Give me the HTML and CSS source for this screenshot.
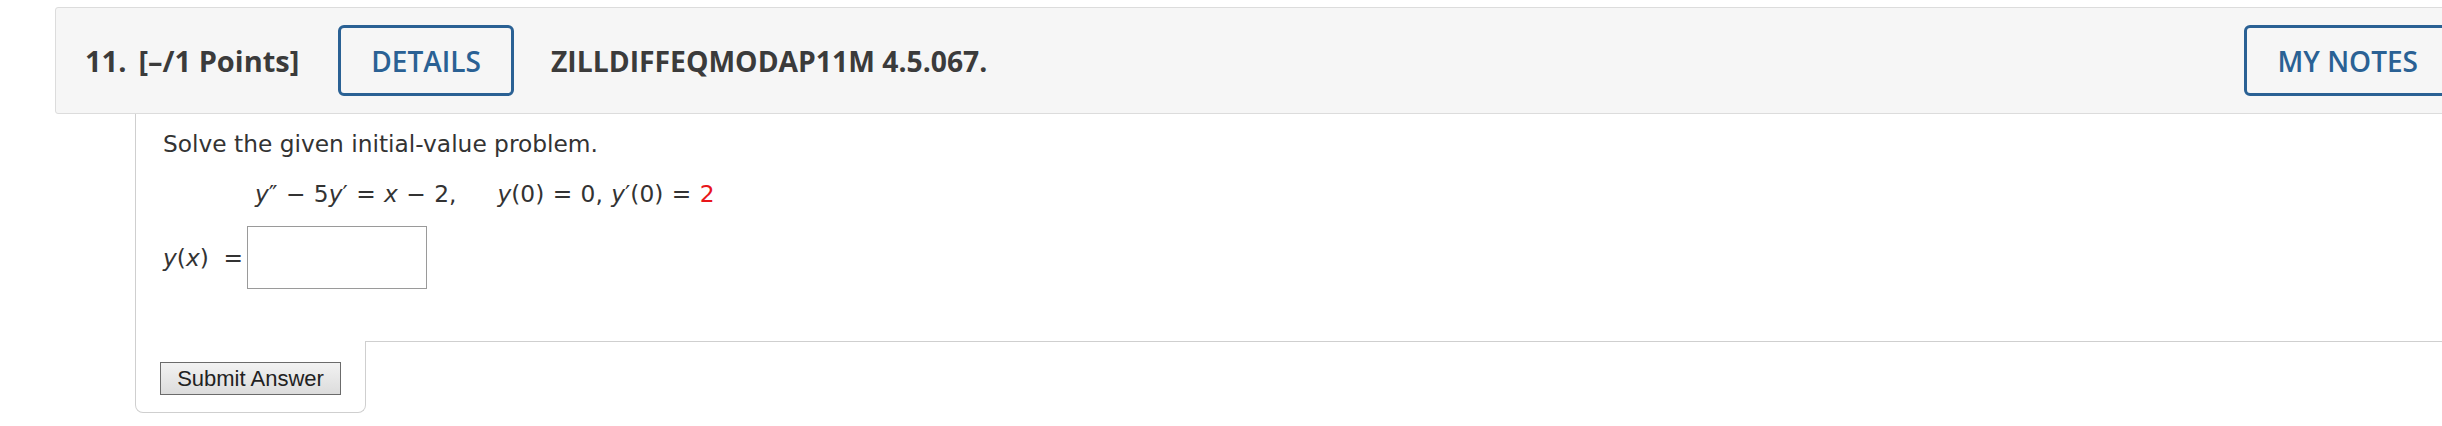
FILE: index.html
```html
<!DOCTYPE html>
<html lang="en">
<head>
    <meta charset="UTF-8">
    <meta name="viewport" content="width=device-width, initial-scale=1.0">
    <title>Question 11</title>
    <link rel="stylesheet" href="styles.css">
</head>
<body>

<div class="page">
    <div class="question-header">
        <span class="q-number">11.</span>
        <span class="q-points">[&ndash;/1 Points]</span>
        <button class="outline-btn details-btn">DETAILS</button>
        <span class="q-code">ZILLDIFFEQMODAP11M 4.5.067.</span>
        <button class="outline-btn notes-btn">MY NOTES</button>
    </div>

    <div class="question-body">
        <p class="prompt">Solve the given initial-value problem.</p>
        <p class="equation">
            <i>y</i>&Prime; &minus; 5<i>y</i>&prime; = <i>x</i> &minus; 2,<span class="cond"><i>y</i>(0) = 0, <i>y</i>&prime;(0) = <span class="red">2</span></span>
        </p>
        <div class="answer-row">
            <span class="answer-label"><i>y</i>(<i>x</i>) &nbsp;=</span>
            <input type="text" class="answer-input">
        </div>
    </div>

    <div class="submit-row">
        <div class="submit-box">
            <button class="submit-btn">Submit Answer</button>
        </div>
        <div class="submit-rest"></div>
    </div>
</div>

</body>
</html>
```

FILE: styles.css
```css
html, body {
    margin: 0;
    padding: 0;
    background-color: #fff;
    overflow: hidden;
}
.page {
    width: 2432px;
    margin-left: 55px;
    padding-top: 7px;
}
.question-header {
    display: flex;
    align-items: center;
    height: 105px;
    padding-left: 29px;
    padding-right: 34px;
    background-color: #f6f6f6;
    border: 1px solid #dcdcdc;
    border-radius: 3px;
    font-family: "Open Sans", sans-serif;
    font-weight: 700;
    font-size: 29px;
    color: #3b3b3b;
}
.q-number {
    margin-right: 12px;
}
.q-points {
    margin-right: 39px;
}
.outline-btn {
    height: 71px;
    padding: 0 30px;
    background: transparent;
    border: 3px solid #2a6194;
    border-radius: 6px;
    font-family: "Open Sans", sans-serif;
    font-weight: 600;
    font-size: 28px;
    color: #2a6194;
}
.q-code {
    margin-left: 37px;
    font-size: 28.3px;
}
.notes-btn {
    margin-left: auto;
    padding: 0 31px;
}
.question-body {
    margin-left: 80px;
    padding: 15px 0 0 27px;
    border-left: 1px solid #cfcfcf;
    font-family: "DejaVu Sans", Verdana, sans-serif;
    font-size: 23.3px;
    color: #333;
    height: 212px;
}
.question-body p {
    margin: 0;
    line-height: 30px;
}
.prompt {
    margin-bottom: 20px !important;
}
.equation {
    padding-left: 92px;
    white-space: nowrap;
    word-spacing: 1px;
}
.cond {
    margin-left: 41px;
}
.red {
    color: #e8161b;
}
.answer-row {
    display: flex;
    align-items: center;
    margin-top: 17px;
}
.answer-label {
    margin-right: 4px;
    line-height: 30px;
}
.answer-input {
    width: 180px;
    height: 63px;
    margin: 0;
    padding: 0;
    border: 1px solid #9a9a9a;
    box-sizing: border-box;
}
.submit-row {
    display: flex;
    margin-left: 80px;
}
.submit-box {
    width: 231px;
    padding: 21px 0 17px 24px;
    border: 1px solid #cfcfcf;
    border-top: none;
    border-radius: 0 0 8px 8px;
    box-sizing: border-box;
}
.submit-btn {
    display: block;
    width: 181px;
    height: 33px;
    padding: 0;
    border: 1px solid #6b6b6b;
    background: linear-gradient(#f2f2f2, #dcdcdc);
    font-family: "Liberation Sans", Arial, sans-serif;
    font-size: 22px;
    color: #222;
}
.submit-rest {
    flex: 1;
    border-top: 1px solid #cfcfcf;
}
```
